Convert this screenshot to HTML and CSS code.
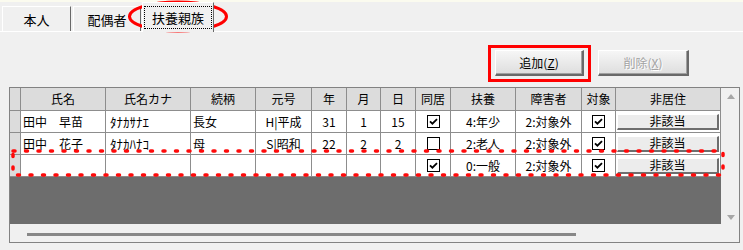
FILE: index.html
```html
<!DOCTYPE html>
<html lang="ja">
<head>
<meta charset="utf-8">
<title>扶養親族</title>
<link rel="stylesheet" href="styles.css">
</head>
<body>
<div class="topstrip"></div>
<div class="tabs">
  <div class="tab t1">本人</div>
  <div class="tab t2">配偶者</div>
  <div class="tab active"><span class="focus">扶養親族</span></div>
</div>
<div class="panel">
  <div class="actions">
    <div class="hl"><button class="btn add">追加(<u>Z</u>)</button></div>
    <button class="btn del" disabled>削除(<u>X</u>)</button>
  </div>
  <div class="frame">
    <div class="main">
      <div class="grid">
        <div class="c h"></div>
        <div class="c h">氏名</div>
        <div class="c h">氏名カナ</div>
        <div class="c h">続柄</div>
        <div class="c h">元号</div>
        <div class="c h">年</div>
        <div class="c h">月</div>
        <div class="c h">日</div>
        <div class="c h">同居</div>
        <div class="c h">扶養</div>
        <div class="c h">障害者</div>
        <div class="c h">対象</div>
        <div class="c h">非居住</div>

        <div class="c h"></div>
        <div class="c l">田中　早苗</div>
        <div class="c l kana">ﾀﾅｶｻﾅｴ</div>
        <div class="c l">長女</div>
        <div class="c">H|平成</div>
        <div class="c">31</div>
        <div class="c">1</div>
        <div class="c">15</div>
        <div class="c"><svg class="chk" width="13" height="13" viewBox="0 0 13 13"><rect x="0.5" y="0.5" width="12" height="12" fill="#fff" stroke="#000"/><path d="M3 6.3 L5.4 8.7 L10 4.1" fill="none" stroke="#000" stroke-width="1.8"/></svg></div>
        <div class="c">4:年少</div>
        <div class="c">2:対象外</div>
        <div class="c"><svg class="chk" width="13" height="13" viewBox="0 0 13 13"><rect x="0.5" y="0.5" width="12" height="12" fill="#fff" stroke="#000"/><path d="M3 6.3 L5.4 8.7 L10 4.1" fill="none" stroke="#000" stroke-width="1.8"/></svg></div>
        <div class="c"><span class="nb">非該当</span></div>

        <div class="c h"></div>
        <div class="c l">田中　花子</div>
        <div class="c l kana">ﾀﾅｶﾊﾅｺ</div>
        <div class="c l">母</div>
        <div class="c">S|昭和</div>
        <div class="c">22</div>
        <div class="c">2</div>
        <div class="c">2</div>
        <div class="c"><svg class="chk" width="13" height="13" viewBox="0 0 13 13"><rect x="0.5" y="0.5" width="12" height="12" fill="#fff" stroke="#000"/></svg></div>
        <div class="c">2:老人</div>
        <div class="c">2:対象外</div>
        <div class="c"><svg class="chk" width="13" height="13" viewBox="0 0 13 13"><rect x="0.5" y="0.5" width="12" height="12" fill="#fff" stroke="#000"/><path d="M3 6.3 L5.4 8.7 L10 4.1" fill="none" stroke="#000" stroke-width="1.8"/></svg></div>
        <div class="c"><span class="nb">非該当</span></div>

        <div class="c h"></div>
        <div class="c l"></div>
        <div class="c l"></div>
        <div class="c l"></div>
        <div class="c"></div>
        <div class="c"></div>
        <div class="c"></div>
        <div class="c"></div>
        <div class="c"><svg class="chk" width="13" height="13" viewBox="0 0 13 13"><rect x="0.5" y="0.5" width="12" height="12" fill="#fff" stroke="#000"/><path d="M3 6.3 L5.4 8.7 L10 4.1" fill="none" stroke="#000" stroke-width="1.8"/></svg></div>
        <div class="c">0:一般</div>
        <div class="c">2:対象外</div>
        <div class="c"><svg class="chk" width="13" height="13" viewBox="0 0 13 13"><rect x="0.5" y="0.5" width="12" height="12" fill="#fff" stroke="#000"/><path d="M3 6.3 L5.4 8.7 L10 4.1" fill="none" stroke="#000" stroke-width="1.8"/></svg></div>
        <div class="c"><span class="nb">非該当</span></div>
      </div>
      <div class="dark"></div>
    </div>
    <div class="vscroll"><span class="arr up"></span><span class="arr down"></span></div>
    <div class="hscroll"><span class="thumb"></span></div>
    <div class="corner"></div>
  </div>
</div>
<svg class="marks" width="743" height="250" viewBox="0 0 743 250">
  <ellipse cx="178" cy="16.5" rx="48.5" ry="14.5" fill="none" stroke="#ff0000" stroke-width="3"/>
  <rect x="13" y="151" width="710" height="24" fill="none" stroke="#ff0a0a" stroke-width="3.5" stroke-dasharray="2 10.5" stroke-linecap="round"/>
</svg>
</body>
</html>
```

FILE: styles.css
```css
* { box-sizing: border-box; }
html, body {
  margin: 0;
  padding: 0;
}
body {
  width: 743px;
  height: 250px;
  overflow: hidden;
  position: relative;
  background: #f0f0f0;
  font-family: "Noto Sans CJK JP", "Noto Sans", sans-serif;
  font-size: 12px;
  color: #000;
}
.topstrip {
  height: 2px;
  background: #fbfbef;
}
.tabs {
  display: flex;
  align-items: flex-end;
  height: 29px;
  padding-left: 2px;
}
.tab {
  height: 25px;
  display: flex;
  align-items: center;
  justify-content: center;
  padding-top: 1px;
  font-size: 13px;
  line-height: 15px;
  border-top: 1px solid #ffffff;
  border-left: 1px solid #ffffff;
  border-right: 1px solid #696969;
  background: #f0f0f0;
}
.t1 { width: 69px; margin-right: 1px; }
.t2 { width: 68px; margin-left: 1px; margin-right: 1px; }
.tab.active {
  width: 72px;
  height: 30px;
  margin-bottom: -1px;
  position: relative;
  z-index: 1;
  padding: 3px 1px 3px 1px;
  align-items: stretch;
}
.focus {
  flex: 1;
  display: flex;
  align-items: center;
  justify-content: center;
  border: 1px dotted #000;
  padding-bottom: 1px;
}
.panel {
  border-top: 1px solid #ffffff;
}
.actions {
  display: flex;
  justify-content: flex-end;
  align-items: flex-start;
  padding-right: 54px;
  margin-top: 13px;
  margin-bottom: 5px;
}
.hl {
  border: 3px solid #ff0000;
  padding: 2px 4px 3px 4px;
  display: flex;
}
.btn {
  height: 26px;
  margin: 0;
  padding: 0;
  font-family: inherit;
  font-size: 12px;
  color: #000;
  background: linear-gradient(#f6f6f6, #dedede);
  border-top: 1px solid #ffffff;
  border-left: 1px solid #ffffff;
  border-right: 2px solid #696969;
  border-bottom: 2px solid #696969;
  box-shadow: inset -1px -1px 0 #a0a0a0;
}
.btn u { text-underline-offset: 1px; }
.add { width: 89px; }
.del {
  width: 91px;
  margin-left: 7px;
  margin-top: 5px;
  color: #a3a3a3;
  text-shadow: 1px 1px 0 #ffffff;
}
.frame {
  margin-left: 9px;
  width: 731px;
  height: 156px;
  border: 1px solid #828282;
  display: grid;
  grid-template-columns: 711px 18px;
  grid-template-rows: 136px 18px;
  background: #f0f0f0;
}
.main {
  display: flex;
  flex-direction: column;
}
.grid {
  display: grid;
  grid-template-columns: 10px 84px 84px 64px 55px 34px 33px 34px 34px 64px 65px 33px 104px;
  grid-template-rows: 22px 21px 21px 21px;
  gap: 1px;
  padding: 0 1px 1px 0;
  background: #8d8d8d;
}
.c {
  background: #ffffff;
  display: flex;
  align-items: center;
  justify-content: center;
  white-space: nowrap;
  overflow: hidden;
  line-height: 14px;
}
.c.h { background: #dcdcdc; padding-bottom: 1px; }
.c.l {
  justify-content: flex-start;
  padding-left: 2px;
}
.c.kana {
  padding-left: 4px;
  font-size: 13px;
}
.chk { display: block; }
.nb {
  width: 102px;
  height: 16px;
  display: flex;
  align-items: center;
  justify-content: center;
  background: #ececec;
  border-top: 1px solid #ffffff;
  border-left: 1px solid #ffffff;
  border-right: 2px solid #6e6e6e;
  border-bottom: 2px solid #6e6e6e;
  line-height: 14px;
}
.dark {
  flex: 1;
  background: #6d6d6d;
}
.vscroll {
  display: flex;
  flex-direction: column;
  justify-content: space-between;
  align-items: center;
  padding: 6px 0 4px 1px;
}
.arr {
  width: 0;
  height: 0;
  border-left: 4px solid transparent;
  border-right: 4px solid transparent;
}
.arr.up { border-bottom: 5px solid #a6a6a6; }
.arr.down { border-top: 5px solid #a6a6a6; }
.hscroll {
  padding: 9px 0 0 17px;
}
.thumb {
  display: block;
  width: 549px;
  height: 3px;
  background: #878787;
}
.marks {
  position: absolute;
  left: 0;
  top: 0;
  pointer-events: none;
}
```
